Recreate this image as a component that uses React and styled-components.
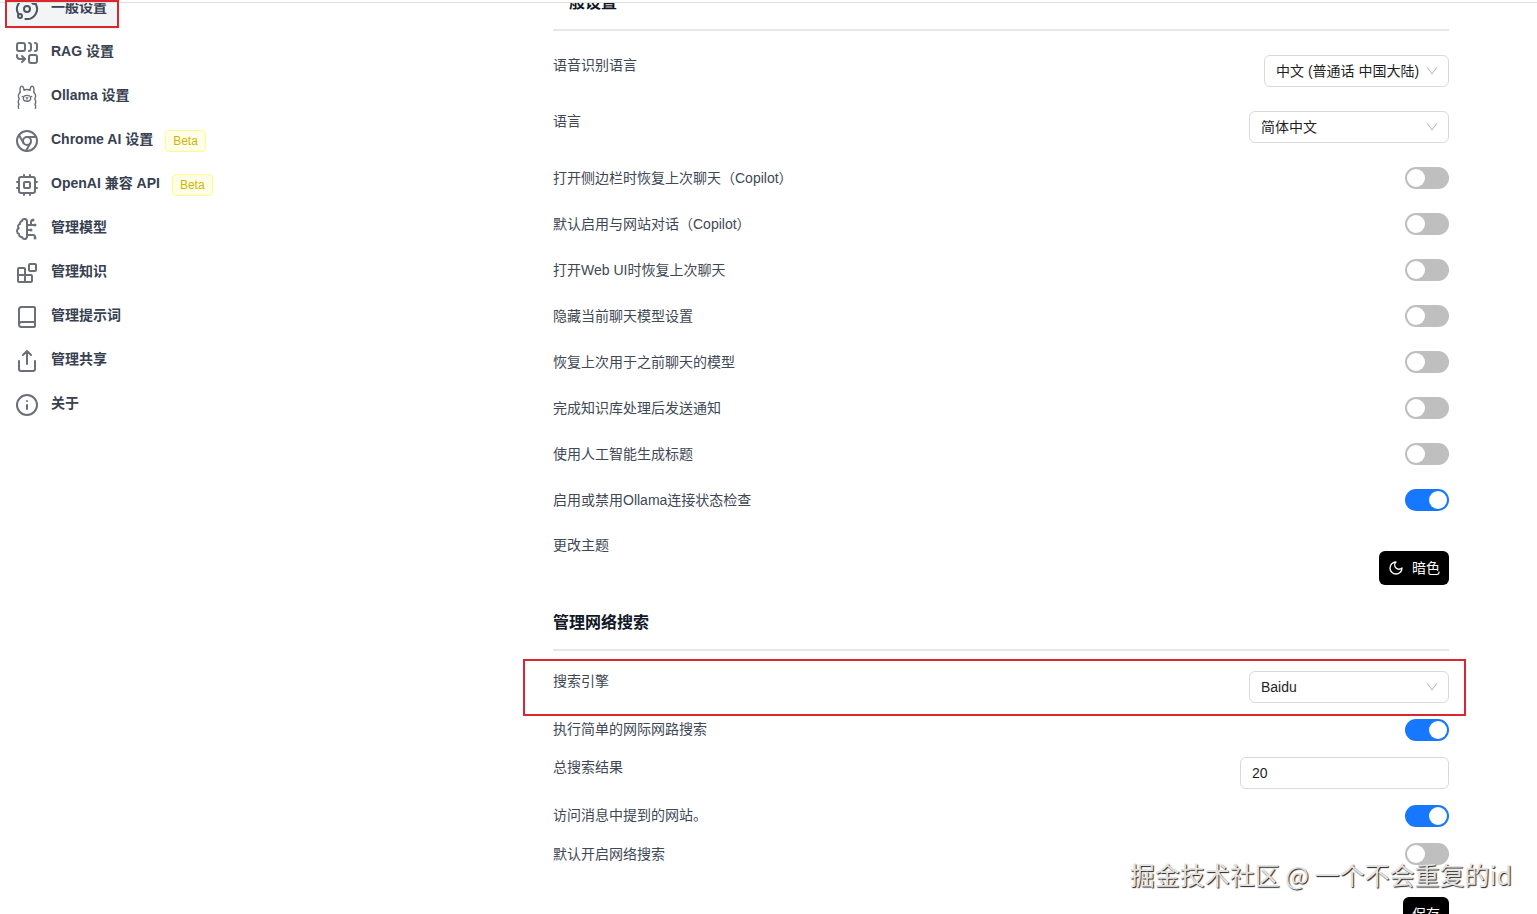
import React from "react";
import styled, { createGlobalStyle } from "styled-components";

const GlobalStyle = createGlobalStyle`
  * { box-sizing: border-box; }
  body {
    margin: 0;
    background: #fff;
    font-family: "Liberation Sans", "Noto Sans CJK SC", sans-serif;
    font-size: 14px;
    line-height: 20px;
  }
`;

const Page = styled.div`
  position: relative;
  height: 100vh;
  overflow: hidden;
  display: flex;
  flex-direction: column;
`;

const Header = styled.header`
  flex: none;
  height: 3px;
  border-bottom: 1px solid #e0e0e0;
`;

const Body = styled.div`
  flex: 1;
  min-height: 0;
  overflow: hidden;
  display: flex;
`;

const Sidebar = styled.nav`
  flex: 0 0 505px;
`;

const NavList = styled.ul`
  list-style: none;
  margin: -14px 0 0;
  padding: 0 8px;
  display: flex;
  flex-direction: column;
  align-items: flex-start;
  gap: 4px;
`;

const NavItem = styled.li`
  display: flex;
  align-items: center;
`;

const NavLink = styled.a`
  display: flex;
  gap: 12px;
  height: 40px;
  padding: 8px 12px 8px 7px;
  border-radius: 6px;
  font-weight: 600;
  color: #374151;
  text-decoration: none;
  background: ${(p) => (p.$active ? "#f3f4f6" : "transparent")};

  svg { color: ${(p) => (p.$active ? "#4b5563" : "#6b7078")}; }
`;

const Icon = styled.svg`
  width: 24px;
  height: 24px;
  flex: none;
  fill: none;
  stroke: currentColor;
  stroke-width: 2;
  stroke-linecap: round;
  stroke-linejoin: round;
`;

const Beta = styled.span`
  height: 22px;
  padding: 0 7px;
  border: 1px solid #fffb8f;
  border-radius: 4px;
  background: #feffe6;
  color: #d4b106;
  font-size: 12px;
  line-height: 20px;
`;

const Main = styled.main`
  flex: 1;
  min-width: 0;
  padding: 0 88px 0 48px;
  margin-top: -12px;
`;

const Section = styled.section`
  padding-top: ${(p) => p.$top || 0}px;
`;

const Title = styled.h2`
  margin: 0;
  padding-bottom: 14px;
  border-bottom: 2px solid #e5e7eb;
  font-size: 16px;
  line-height: 24px;
  font-weight: 600;
  color: #111827;
`;

const Rows = styled.div`
  display: flex;
  flex-direction: column;
  gap: ${(p) => p.$gap}px;
  padding-top: ${(p) => p.$top}px;
`;

const Row = styled.div`
  display: flex;
  justify-content: space-between;
  align-items: ${(p) => p.$align || "center"};
`;

const Label = styled.label`
  color: #404855;
`;

const SelectBox = styled.span`
  position: relative;
  display: inline-flex;
  width: ${(p) => p.$width}px;

  svg {
    position: absolute;
    right: 11px;
    top: 10px;
    width: 12px;
    height: 12px;
    stroke-width: 1;
    color: #b8b8b8;
    pointer-events: none;
  }
`;

const SelectInput = styled.select`
  appearance: none;
  width: 100%;
  height: 32px;
  padding: 0 24px 0 11px;
  border: 1px solid #d9d9d9;
  border-radius: 6px;
  background: #fff;
  color: #1f1f1f;
  font: inherit;
`;

const NumberInput = styled.input`
  width: 209px;
  height: 32px;
  padding: 0 11px;
  border: 1px solid #d9d9d9;
  border-radius: 6px;
  color: #1f1f1f;
  font: inherit;
`;

const Switch = styled.input.attrs({ type: "checkbox", role: "switch" })`
  appearance: none;
  width: 44px;
  height: 22px;
  margin: 0;
  padding: 2px;
  border-radius: 11px;
  background: #bfbfbf;
  display: flex;

  &::before {
    content: "";
    width: 18px;
    height: 18px;
    border-radius: 50%;
    background: #fff;
  }
  &:checked {
    background: #1677ff;
    justify-content: flex-end;
  }
`;

const DarkButton = styled.button`
  display: flex;
  align-items: center;
  gap: 8px;
  height: 34px;
  padding: 0 9px;
  border: 0;
  border-radius: 6px;
  background: #000;
  color: #fff;
  font: inherit;

  svg { width: 16px; height: 16px; }
`;

const Actions = styled.div`
  display: flex;
  justify-content: flex-end;
  padding-top: ${(p) => p.$top}px;
`;

const Marker = styled.div`
  position: absolute;
  border: 2px solid #d9262f;
  pointer-events: none;
`;

const NavMarker = styled(Marker)`
  left: 5px;
  top: 0;
  width: 114px;
  height: 28px;
`;

const EngineMarker = styled(Marker)`
  left: -30px;
  right: -17px;
  top: -12px;
  height: 57px;
`;

const MarkedRow = styled(Row)`
  position: relative;
`;

const Watermark = styled.div`
  position: absolute;
  right: 25px;
  bottom: 22px;
  font-family: "Noto Sans CJK SC", sans-serif;
  font-size: 25px;
  line-height: 36px;
  font-weight: 400;
  color: #e2e2e2;
  text-shadow: 1px 1px 1px #222;
  pointer-events: none;
`;

const icons = {
  orbit: (
    <>
      <circle cx="12" cy="12" r="3" />
      <circle cx="19" cy="5" r="2" />
      <circle cx="5" cy="19" r="2" />
      <path d="M10.4 21.9a10 10 0 0 0 9.941-15.416" />
      <path d="M13.5 2.1a10 10 0 0 0-9.841 15.416" />
    </>
  ),
  combine: (
    <>
      <rect width="8" height="8" x="2" y="2" rx="2" />
      <path d="M14 2c1.1 0 2 .9 2 2v4c0 1.1-.9 2-2 2" />
      <path d="M20 2c1.1 0 2 .9 2 2v4c0 1.1-.9 2-2 2" />
      <path d="M10 18H5c-1.7 0-3-1.3-3-3v-1" />
      <polyline points="7 21 10 18 7 15" />
      <rect width="8" height="8" x="14" y="14" rx="2" />
    </>
  ),
  llama: (
    <g strokeWidth="1.4">
      <path d="M5.200 7.300C4.700 4.500 5.100 1.200 6.600 1.200c1.500 0 2.300 2.200 2.400 4.100 1.900-1.100 4.100-1.100 6 0 .1-1.900.9-4.100 2.400-4.100 1.500 0 1.900 3.300 1.400 6.100" />
      <path d="M5.200 7.300c-2 1.700-2.100 4.400-1 6.600-1.200 1.900-1 4.100-.2 5.500-.8 1.400-.8 2.700-.4 4" />
      <path d="M18.800 7.300c2 1.700 2.100 4.400 1 6.600 1.200 1.900 1 4.100.2 5.500.8 1.400.8 2.700.4 4" />
      <ellipse cx="12" cy="13.300" rx="3.700" ry="2.900" />
      <path d="M11.300 12.700l.7.500.7-.5M12 13.200v.9M7.300 11.400h.1M16.600 11.400h.1" />
    </g>
  ),
  chrome: (
    <>
      <circle cx="12" cy="12" r="10" />
      <circle cx="12" cy="12" r="4" />
      <path d="M21.170 8H12M3.950 6.060L8.540 14M10.880 21.940L15.460 14" />
    </>
  ),
  cpu: (
    <>
      <rect width="16" height="16" x="4" y="4" rx="2" />
      <rect width="6" height="6" x="9" y="9" rx="1" />
      <path d="M15 2v2M15 20v2M2 15h2M2 9h2M20 15h2M20 9h2M9 2v2M9 20v2" />
    </>
  ),
  brain: (
    <>
      <path d="M12 4.500a2.500 2.500 0 0 0-4.960-.460 2.500 2.500 0 0 0-1.980 3 2.500 2.500 0 0 0-1.320 4.240 3 3 0 0 0 .340 5.580 2.500 2.500 0 0 0 2.960 3.080 2.500 2.500 0 0 0 4.910.050L12 20V4.500Z" />
      <path d="M16 8V5c0-1.100.900-2 2-2M12 13h4M12 18h6a2 2 0 0 1 2 2v1M12 8h8" />
      <circle cx="20" cy="8" r=".5" />
      <circle cx="16" cy="13" r=".5" />
      <circle cx="20" cy="21" r=".5" />
      <circle cx="18" cy="3" r=".5" />
    </>
  ),
  blocks: (
    <>
      <rect width="7" height="7" x="14" y="3" rx="1" />
      <path d="M10 21V8a1 1 0 0 0-1-1H4a1 1 0 0 0-1 1v12a1 1 0 0 0 1 1h12a1 1 0 0 0 1-1v-5a1 1 0 0 0-1-1H3" />
    </>
  ),
  book: (
    <path d="M4 19.500v-15A2.500 2.500 0 0 1 6.500 2H19a1 1 0 0 1 1 1v18a1 1 0 0 1-1 1H6.500a1 1 0 0 1 0-5H20" />
  ),
  share: <path d="M4 12v8a2 2 0 0 0 2 2h12a2 2 0 0 0 2-2v-8M16 6l-4-4-4 4M12 2v13" />,
  info: (
    <>
      <circle cx="12" cy="12" r="10" />
      <path d="M12 16v-4M12 8h.01" />
    </>
  ),
};

const navItems = [
  { icon: "orbit", text: "一般设置", active: true },
  { icon: "combine", text: "RAG 设置" },
  { icon: "llama", text: "Ollama 设置" },
  { icon: "chrome", text: "Chrome AI 设置", beta: true },
  { icon: "cpu", text: "OpenAI 兼容 API", beta: true },
  { icon: "brain", text: "管理模型" },
  { icon: "blocks", text: "管理知识" },
  { icon: "book", text: "管理提示词" },
  { icon: "share", text: "管理共享" },
  { icon: "info", text: "关于" },
];

const toggles = [
  ["copilot-resume", "打开侧边栏时恢复上次聊天（Copilot）", false],
  ["copilot-site", "默认启用与网站对话（Copilot）", false],
  ["webui-resume", "打开Web UI时恢复上次聊天", false],
  ["hide-model", "隐藏当前聊天模型设置", false],
  ["restore-model", "恢复上次用于之前聊天的模型", false],
  ["notify", "完成知识库处理后发送通知", false],
  ["ai-title", "使用人工智能生成标题", false],
  ["ollama-check", "启用或禁用Ollama连接状态检查", true],
];

function Select({ id, value, width }) {
  return (
    <SelectBox $width={width}>
      <SelectInput id={id} defaultValue={value}>
        <option>{value}</option>
      </SelectInput>
      <Icon viewBox="0 0 12 12" aria-hidden="true">
        <path d="M1.500 2.500L6 9l4.500-6.500" />
      </Icon>
    </SelectBox>
  );
}

function ToggleRow({ id, text, on, align }) {
  return (
    <Row $align={align}>
      <Label htmlFor={id}>{text}</Label>
      <Switch id={id} defaultChecked={on} />
    </Row>
  );
}

export default function App() {
  return (
    <Page>
      <GlobalStyle />
      <Header />
      <Body>
        <Sidebar>
          <NavList>
            {navItems.map((item) => (
              <NavItem key={item.text}>
                <NavLink href="#" $active={item.active}>
                  <Icon viewBox="0 0 24 24" aria-hidden="true">
                    {icons[item.icon]}
                  </Icon>
                  {item.text}
                </NavLink>
                {item.beta && <Beta>Beta</Beta>}
              </NavItem>
            ))}
          </NavList>
        </Sidebar>
        <Main>
          <Section>
            <Title>一般设置</Title>
            <Rows $gap={24} $top={24}>
              <Row $align="flex-start">
                <Label htmlFor="speech">语音识别语言</Label>
                <Select id="speech" value="中文 (普通话 中国大陆)" width={185} />
              </Row>
              <Row $align="flex-start">
                <Label htmlFor="language">语言</Label>
                <Select id="language" value="简体中文" width={200} />
              </Row>
              {toggles.map(([id, text, on]) => (
                <ToggleRow key={id} id={id} text={text} on={on} />
              ))}
              <Row $align="flex-start">
                <Label htmlFor="theme">更改主题</Label>
                <Actions $top={16}>
                  <DarkButton id="theme" type="button">
                    <Icon viewBox="0 0 24 24" aria-hidden="true">
                      <path d="M12 3a6 6 0 0 0 9 9 9 9 0 1 1-9-9Z" />
                    </Icon>
                    暗色
                  </DarkButton>
                </Actions>
              </Row>
            </Rows>
          </Section>
          <Section $top={26}>
            <Title>管理网络搜索</Title>
            <Rows $gap={16} $top={20}>
              <MarkedRow $align="flex-start">
                <Label htmlFor="engine">搜索引擎</Label>
                <Select id="engine" value="Baidu" width={200} />
                <EngineMarker />
              </MarkedRow>
              <ToggleRow id="simple" text="执行简单的网际网路搜索" align="flex-start" on />
              <Row $align="flex-start">
                <Label htmlFor="total">总搜索结果</Label>
                <NumberInput id="total" defaultValue="20" inputMode="numeric" />
              </Row>
              <ToggleRow id="visit" text="访问消息中提到的网站。" align="flex-start" on />
              <ToggleRow id="default-search" text="默认开启网络搜索" on={false} />
            </Rows>
            <Actions $top={32}>
              <DarkButton type="button">保存</DarkButton>
            </Actions>
          </Section>
        </Main>
      </Body>
      <NavMarker />
      <Watermark>掘金技术社区 @ 一个不会重复的id</Watermark>
    </Page>
  );
}
